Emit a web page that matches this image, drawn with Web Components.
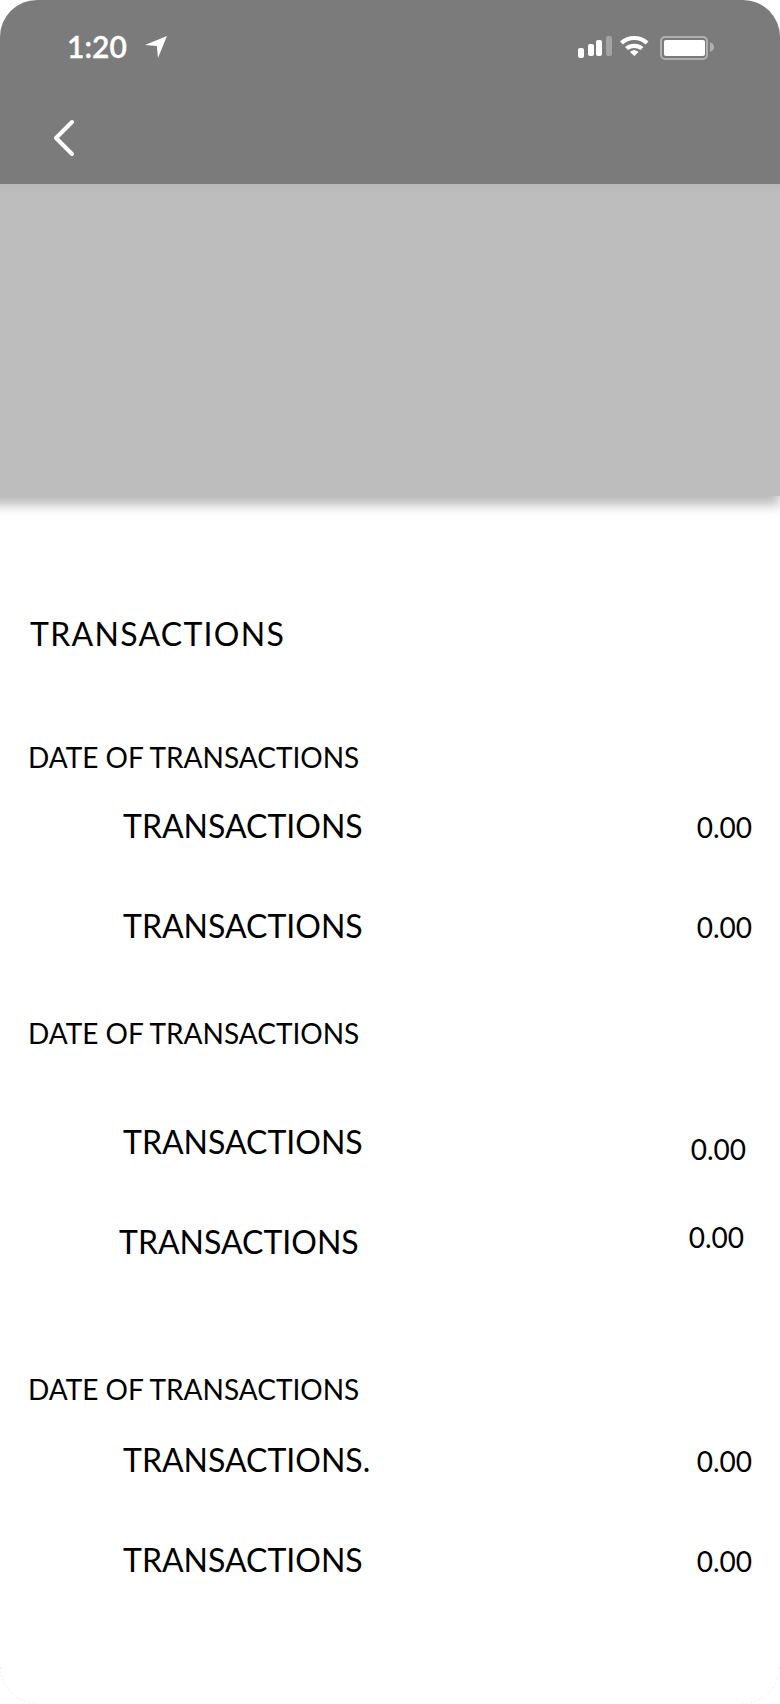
<!DOCTYPE html>
<html lang="en">
<head>
	<meta charset="utf-8">
	<title>Transactions</title>
	<style>
		body {
			margin: 0;
			background-color: #fff;
			color: #000;
			font-family: Lato, 'Open Sans', sans-serif;
		}
	</style>
</head>
<body>
	<phone-screen>
		<app-header slot="header">
			<status-bar slot="status">1:20</status-bar>
		</app-header>
		<hero-banner></hero-banner>
		<section-title>TRANSACTIONS</section-title>
		<transaction-group style="margin-top: 83px">
			<span slot="date">DATE OF TRANSACTIONS</span>
			<transaction-row amount="0.00" style="margin-top: 29px; --amount-drop: 1px">TRANSACTIONS</transaction-row>
			<transaction-row amount="0.00" style="margin-top: 59px; --amount-drop: 1px">TRANSACTIONS</transaction-row>
		</transaction-group>
		<transaction-group style="margin-top: 66px">
			<span slot="date">DATE OF TRANSACTIONS</span>
			<transaction-row amount="0.00" style="margin-top: 69px; --amount-drop: 7px; --end: 34px">TRANSACTIONS</transaction-row>
			<transaction-row amount="0.00" style="margin-top: 48px; --label-drop: 5px; --start: 119px; --end: 36px">TRANSACTIONS</transaction-row>
		</transaction-group>
		<transaction-group style="margin-top: 107px">
			<span slot="date">DATE OF TRANSACTIONS</span>
			<transaction-row amount="0.00" style="margin-top: 31px; --amount-drop: 1px">TRANSACTIONS.</transaction-row>
			<transaction-row amount="0.00" style="margin-top: 59px; --amount-drop: 1px">TRANSACTIONS</transaction-row>
		</transaction-group>
	</phone-screen>

	<script>
		class PhoneScreen extends HTMLElement {
			constructor() {
				super();
				this.root = this.attachShadow({ mode: 'open' });
				this.root.innerHTML = `
					<style>
						:host {
							display: flex;
							flex-direction: column;
							width: 780px;
							height: 1704px;
							overflow: hidden;
							border-radius: 37px;
							background-color: #fff;
						}
						.corners {
							display: flex;
							justify-content: space-between;
							margin-top: auto;
						}
						svg {
							display: block;
						}
					</style>
					<slot name="header"></slot>
					<slot></slot>
					<div class="corners">
						<svg width="40" height="40" fill="none" stroke="#ececec" stroke-dasharray="2 2">
							<path d="M.5 3A36.5 36.5 0 0 0 37 39.5"/>
						</svg>
						<svg width="40" height="40" fill="none" stroke="#ececec" stroke-dasharray="2 2">
							<path d="M39.5 3A36.5 36.5 0 0 1 3 39.5"/>
						</svg>
					</div>
				`;
			}
		}

		class AppHeader extends HTMLElement {
			constructor() {
				super();
				this.root = this.attachShadow({ mode: 'open' });
				this.root.innerHTML = `
					<style>
						:host {
							display: block;
							height: 184px;
							flex: none;
							box-sizing: border-box;
							background-color: #7b7b7b;
							color: #fff;
						}
						button {
							display: block;
							margin: 26px 0 0 50px;
							padding: 0;
							border: none;
							background-color: transparent;
							color: inherit;
							cursor: pointer;
						}
						svg {
							display: block;
						}
					</style>
					<slot name="status"></slot>
					<button aria-label="Back">
						<svg width="28" height="44" fill="none" stroke="currentColor" stroke-width="4" stroke-linecap="round" stroke-linejoin="round">
							<path d="M22 6L6 22L22 38"/>
						</svg>
					</button>
				`;
			}
		}

		class StatusBar extends HTMLElement {
			constructor() {
				super();
				this.root = this.attachShadow({ mode: 'open' });
				this.root.innerHTML = `
					<style>
						:host {
							display: flex;
							align-items: flex-start;
							height: 90px;
							box-sizing: border-box;
							padding: 26px 65px 0 67px;
						}
						.time {
							font-size: 30px;
							font-weight: 600;
							line-height: 40px;
							-webkit-text-stroke: 0.3px currentColor;
						}
						svg {
							display: block;
							fill: currentColor;
						}
						.location {
							margin: 9px 0 0 18px;
						}
						.indicators {
							margin: 8px 0 0 auto;
						}
					</style>
					<span class="time"><slot></slot></span>
					<svg class="location" width="24" height="24">
						<path d="M22 1L13 23L11.800 11L0 10Z"/>
					</svg>
					<svg class="indicators" width="138" height="28">
						<rect x="1" y="14" width="6" height="10" rx="2"/>
						<rect x="11" y="10" width="6" height="12" rx="2"/>
						<rect x="19" y="6" width="6" height="16" rx="2"/>
						<rect x="29" y="2" width="6" height="20" rx="2" opacity=".3"/>
						<path d="M43 7.500C51 .2 63.500 .2 71.500 7.500L68.500 10.500C62 4.600 52.500 4.600 46 10.500Z"/>
						<path d="M48 13C53.500 8.700 61 8.700 66.500 13L63.500 16C60 13.300 54.500 13.300 51 16Z"/>
						<path d="M53 18C55.500 15.500 59 15.500 61.500 18L57.300 22Z"/>
						<rect x="84" y="3" width="46" height="22" rx="4" fill="none" stroke="#fff" stroke-width="2" opacity=".4"/>
						<rect x="87" y="6" width="41" height="16" rx="2"/>
						<path d="M133 8C138.500 10.500 138.500 15.500 133 18Z" opacity=".4"/>
					</svg>
				`;
			}
		}

		class HeroBanner extends HTMLElement {
			constructor() {
				super();
				this.root = this.attachShadow({ mode: 'open' });
				this.root.innerHTML = `
					<style>
						:host {
							display: block;
							flex: none;
							height: 312px;
							background: linear-gradient(#b7b7b7, #bdbdbd 10px);
							box-shadow: -12px -3px 11px 12px rgba(0, 0, 0, 0.27);
							clip-path: inset(0 0 -24px 0);
						}
					</style>
				`;
			}
		}

		class SectionTitle extends HTMLElement {
			constructor() {
				super();
				this.root = this.attachShadow({ mode: 'open' });
				this.root.innerHTML = `
					<style>
						:host {
							display: block;
							margin: 118px 0 0 30px;
							font-size: 32px;
							line-height: 40px;
							letter-spacing: 1.28px;
						}
					</style>
					<slot></slot>
				`;
			}
		}

		class TransactionGroup extends HTMLElement {
			constructor() {
				super();
				this.root = this.attachShadow({ mode: 'open' });
				this.root.innerHTML = `
					<style>
						:host {
							display: block;
						}
						.date {
							padding-left: 28px;
							font-size: 28px;
							line-height: 40px;
						}
					</style>
					<div class="date"><slot name="date"></slot></div>
					<slot></slot>
				`;
			}
		}

		class TransactionRow extends HTMLElement {
			constructor() {
				super();
				this.root = this.attachShadow({ mode: 'open' });
			}

			connectedCallback() {
				this.root.innerHTML = `
					<style>
						:host {
							display: flex;
							justify-content: space-between;
							align-items: flex-start;
							padding: 0 var(--end, 28px) 0 var(--start, 123px);
							line-height: 40px;
						}
						.label {
							margin-top: var(--label-drop, 0);
							font-size: 32px;
						}
						.amount {
							margin-top: var(--amount-drop, 0);
							font-size: 28px;
						}
					</style>
					<span class="label"><slot></slot></span>
					<span class="amount">${this.getAttribute('amount')}</span>
				`;
			}
		}

		customElements.define('phone-screen', PhoneScreen);
		customElements.define('app-header', AppHeader);
		customElements.define('status-bar', StatusBar);
		customElements.define('hero-banner', HeroBanner);
		customElements.define('section-title', SectionTitle);
		customElements.define('transaction-group', TransactionGroup);
		customElements.define('transaction-row', TransactionRow);
	</script>
</body>
</html>
